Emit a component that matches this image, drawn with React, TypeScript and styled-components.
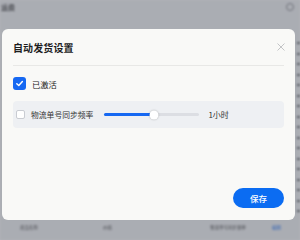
import { FC, ReactElement } from "react";
import styled, { createGlobalStyle } from "styled-components";

const GlobalStyle = createGlobalStyle`
  html, body {
    margin: 0;
    padding: 0;
    width: 300px;
    height: 240px;
    overflow: hidden;
    font-family: "Noto Sans CJK SC", "Noto Sans", sans-serif;
  }
`;

const tableRows = Array.from({ length: 17 }, (_, i) => i);

const App: FC = (): ReactElement => {
  return (
    <Screen>
      <GlobalStyle />
      <Page>
        <TopBar>
          <PageTitle>运费</PageTitle>
          <UserDot />
        </TopBar>
        <TableBody>
          {tableRows.map((i) => (
            <TableRow key={i}>
              <RowTail />
            </TableRow>
          ))}
        </TableBody>
        <BottomRow>
          <Cell $left={20}>商品名称</Cell>
          <Cell $left={103}>价格</Cell>
          <Cell $left={210}>物流单号同步频率</Cell>
          <Cell $left={272} $link>编辑</Cell>
        </BottomRow>
      </Page>
      <Overlay />

      <Dialog>
        <Header>
          <Title>自动发货设置</Title>
          <CloseButton aria-label="关闭">
            <svg width="8" height="8" viewBox="0 0 8 8">
              <path d="M0.5 0.5 L7.5 7.5 M7.5 0.5 L0.5 7.5" stroke="#c3c4c6" strokeWidth="1" fill="none" />
            </svg>
          </CloseButton>
        </Header>
        <Divider />
        <Body>
          <ActiveRow>
            <CheckBox $checked>
              <svg width="9" height="9" viewBox="0 0 10 10">
                <path d="M2 5.2 L4.2 7.3 L8.2 2.8" stroke="#fff" strokeWidth="1.6" fill="none" strokeLinecap="round" strokeLinejoin="round" />
              </svg>
            </CheckBox>
            <ActiveLabel>已激活</ActiveLabel>
          </ActiveRow>

          <SyncPanel>
            <SmallBox />
            <SyncLabel>物流单号同步频率</SyncLabel>
            <Slider>
              <SliderFill style={{ width: "52%" }} />
              <SliderThumb style={{ left: "52%" }} />
            </Slider>
            <SliderValue>1小时</SliderValue>
          </SyncPanel>
        </Body>
        <Footer>
          <SaveButton>保存</SaveButton>
        </Footer>
      </Dialog>
    </Screen>
  );
};

const Screen = styled.div`
  position: relative;
  width: 300px;
  height: 240px;
  overflow: hidden;
`;

const Page = styled.div`
  width: 300px;
  height: 240px;
  background: #f4f5f7;
  display: flex;
  flex-direction: column;
  filter: blur(1.2px);
`;

const TopBar = styled.div`
  height: 14px;
  display: flex;
  align-items: center;
  justify-content: space-between;
  padding: 0 6px 0 1px;
`;

const PageTitle = styled.span`
  font-size: 7px;
  color: #222;
`;

const UserDot = styled.span`
  width: 8px;
  height: 8px;
  border-radius: 50%;
  border: 1px solid #9a9ca0;
  box-sizing: border-box;
`;

const TableBody = styled.div`
  flex: 1;
  display: flex;
  flex-direction: column;
  padding-top: 24px;
`;

const TableRow = styled.div`
  height: 10.5px;
  display: flex;
  justify-content: flex-end;
  align-items: center;
`;

const RowTail = styled.div`
  width: 3px;
  height: 2px;
  background: #7a7c80;
`;

const BottomRow = styled.div`
  position: relative;
  height: 22px;
`;

const Cell = styled.span<{ $left: number; $link?: boolean }>`
  position: absolute;
  left: ${(p) => p.$left}px;
  top: 6px;
  font-size: 4.5px;
  color: ${(p) => (p.$link ? "#3b82f6" : "#666")};
`;

const Overlay = styled.div`
  position: absolute;
  inset: 0;
  background: rgba(22, 27, 42, 0.33);
`;

const Dialog = styled.div`
  position: absolute;
  left: 2px;
  top: 29px;
  width: 293px;
  height: 191px;
  background: #f9f9f7;
  border-radius: 6px;
  display: flex;
  flex-direction: column;
  box-sizing: border-box;
  padding: 0 11px 12px;
`;

const Header = styled.div`
  height: 36px;
  display: flex;
  align-items: center;
  justify-content: space-between;
`;

const Title = styled.h2`
  margin: 0;
  font-size: 10px;
  font-weight: 600;
  color: #1d1d1f;
  letter-spacing: 0.1px;
`;

const CloseButton = styled.button`
  width: 8px;
  height: 8px;
  padding: 0;
  border: none;
  background: none;
  display: flex;
  margin-right: -1px;
`;

const Divider = styled.div`
  height: 1px;
  background: #e8e8e6;
`;

const Body = styled.div`
  display: flex;
  flex-direction: column;
  padding-top: 11px;
  gap: 11px;
`;

const ActiveRow = styled.label`
  display: flex;
  align-items: center;
  height: 13px;
  gap: 6px;
`;

const CheckBox = styled.span<{ $checked?: boolean }>`
  width: 13px;
  height: 13px;
  box-sizing: border-box;
  border-radius: 3px;
  background: ${(p) => (p.$checked ? "#1668f2" : "#fff")};
  display: flex;
  align-items: center;
  justify-content: center;
`;

const ActiveLabel = styled.span`
  font-size: 8.3px;
  color: #222;
`;

const SyncPanel = styled.div`
  height: 27px;
  background: #eef0f3;
  border-radius: 4px;
  display: flex;
  align-items: center;
  padding-left: 3px;
`;

const SmallBox = styled.span`
  width: 9px;
  height: 9px;
  box-sizing: border-box;
  border: 1px solid #c9ccd2;
  border-radius: 2px;
  background: #fff;
`;

const SyncLabel = styled.span`
  margin-left: 6px;
  font-size: 7.8px;
  color: #333;
`;

const Slider = styled.div`
  position: relative;
  margin-left: 11px;
  width: 95px;
  height: 3px;
  border-radius: 2px;
  background: #dcdee3;
`;

const SliderFill = styled.div`
  height: 100%;
  border-radius: 2px;
  background: #1668f2;
`;

const SliderThumb = styled.div`
  position: absolute;
  top: 50%;
  width: 9px;
  height: 9px;
  border-radius: 50%;
  background: #fff;
  box-shadow: 0 0 2px rgba(0, 0, 0, 0.3);
  transform: translate(-50%, -50%);
`;

const SliderValue = styled.span`
  margin-left: 9px;
  font-size: 8px;
  color: #333;
`;

const Footer = styled.div`
  margin-top: auto;
  display: flex;
  justify-content: flex-end;
`;

const SaveButton = styled.button`
  width: 51px;
  height: 20px;
  border: none;
  border-radius: 10px;
  background: #0b6cf2;
  color: #fff;
  font-family: inherit;
  font-size: 8.5px;
  font-weight: 500;
  padding: 0;
`;

export default App;
